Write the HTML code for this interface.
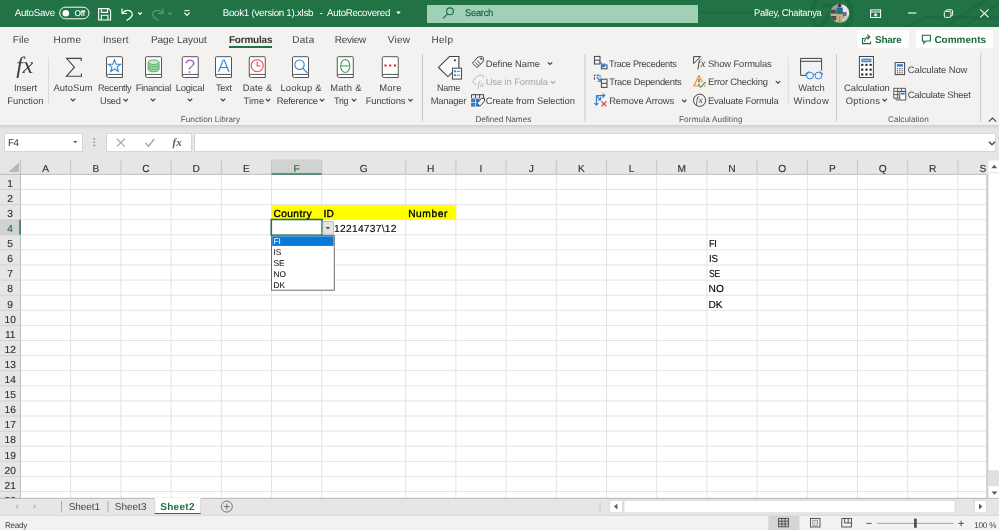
<!DOCTYPE html>
<html lang="en"><head><meta charset="utf-8"><title>Book1 (version 1).xlsb - AutoRecovered - Excel</title>
<style>
html,body{margin:0;padding:0;background:#fff;}
body{width:999px;height:530px;overflow:hidden;font-family:"Liberation Sans",sans-serif;}
#app{position:relative;width:999px;height:530px;overflow:hidden;background:#fff;}
#app div{position:absolute;box-sizing:border-box;}
#title{left:0;top:0;width:999px;height:27px;background:#217346;}
#search{left:427px;top:4.5px;width:271px;height:18px;background:#a0d0b6;}
#ribbon{left:0;top:27px;width:999px;height:98px;background:#f3f2f1;}
#rshadow{left:0;top:125px;width:999px;height:5px;background:linear-gradient(#cfcfcf,#d9d9d9 35%,#e2e2e2 70%,#e6e6e6);}
#fbar{left:0;top:128px;width:999px;height:32px;background:#e6e6e6;}
.wbox{background:#fff;border:1px solid #d6d6d6;}
#namebox{left:3.5px;top:133.4px;width:79px;height:18.6px;}
#fbtns{left:106.4px;top:133.4px;width:85.5px;height:18.6px;}
#finput{left:194.4px;top:133.4px;width:802px;height:18.6px;}
#hdr{left:0;top:159.5px;width:999px;height:15px;background:#e6e6e6;}
#rowhdr{left:0;top:174px;width:20.5px;height:324px;background:#e6e6e6;}
#grid{left:20.5px;top:174.5px;width:966.5px;height:323.5px;background:#fff;}
#vscroll{left:987px;top:159.5px;width:12px;height:339px;background:#f0f0f0;}
#tabbar{left:0;top:498px;width:999px;height:17.5px;background:#e6e6e6;border-top:1px solid #c6c6c6;}
#status{left:0;top:515.5px;width:999px;height:14.5px;background:#f3f2f1;}
#sharebtn{left:856.7px;top:29.5px;width:52px;height:18px;background:#fff;border-radius:2px;}
#combtn{left:915.6px;top:29.5px;width:77.2px;height:18px;background:#fff;border-radius:2px;}
#tabul{left:229px;top:46px;width:43px;height:2px;background:#217346;}
#art{position:absolute;left:0;top:0;width:999px;height:530px;will-change:transform;}
#texts{position:absolute;left:0;top:0;will-change:transform;}
span.t{position:absolute;white-space:pre;line-height:1;text-rendering:geometricPrecision;}
#art text{text-rendering:geometricPrecision;}
span.t{transform-origin:0 0;}

</style></head><body>
<div id="app">
<div id="title"></div>
<div id="search"></div>
<div id="ribbon"></div>
<div id="sharebtn"></div>
<div id="combtn"></div>
<div id="tabul"></div>
<div id="fbar"></div>
<div id="rshadow"></div>
<div id="namebox" class="wbox"></div>
<div id="fbtns" class="wbox"></div>
<div id="finput" class="wbox"></div>
<div id="hdr"></div>
<div id="rowhdr"></div>
<div id="grid"></div>
<div id="vscroll"></div>
<div id="tabbar"></div>
<div id="status"></div>
<svg id="art" width="999" height="530" viewBox="0 0 999 530">
<clipPath id="tc"><rect x="0" y="0" width="999" height="27"/></clipPath><g clip-path="url(#tc)" fill="none" stroke="#1d6a3f" stroke-width="4"><circle cx="831.9" cy="13.3" r="20"/><path d="M822,5.5 H836 L820,27"/><path d="M699,12.5 H812" stroke-width="2.4"/><path d="M900,30 L926,17.5 H999" stroke-width="2.4"/><path d="M940,30 L990,-3" stroke-width="2.4"/><path d="M958,30 L999,3" stroke-width="2.4"/></g>
<rect x="59.7" y="7.2" width="29.3" height="11.6" rx="5.8" fill="none" stroke="#fff" stroke-width="1"/>
<circle cx="65.8" cy="13.2" r="3.3" fill="#fff"/>
<g transform="translate(0,0.6)" fill="none" stroke="#fff" stroke-width="1.1"><path d="M98.6,8 H108.6 L110.6,10 V19.4 H98.6 Z"/><path d="M101.3,8 V11.8 H107.6 V8"/><path d="M101.3,19.4 V14.6 H107.9 V19.4"/></g>
<g transform="translate(0,0.5)" fill="none" stroke="#fff" stroke-width="1.2"><path d="M122,8 V13 H127"/><path d="M122.3,12.7 C125,9 130,9 131.8,12 C133.5,15 131,17.5 126.5,20"/></g>
<path d="M138.20,12.45 L140.00,14.35 L141.80,12.45" fill="none" stroke="#fff" stroke-width="1.2"/>
<g transform="translate(0,0.5)" fill="none" stroke="#5c9a7b" stroke-width="1.2"><path d="M163,8 V13 H158"/><path d="M162.7,12.7 C160,9 155,9 153.2,12 C151.5,15 154,17.5 158.5,20"/></g>
<path d="M168.20,12.45 L170.00,14.35 L171.80,12.45" fill="none" stroke="#5c9a7b" stroke-width="1.2"/>
<path d="M184.5,10.6 H189.5" stroke="#fff" stroke-width="1" fill="none"/>
<path d="M184.3,12.7 L187,15.4 L189.7,12.7" stroke="#fff" stroke-width="1.1" fill="none"/>
<path d="M396.2,11.5 H400.8 L398.5,14.2 Z" fill="#fff"/>
<g fill="none" stroke="#1e6b41" stroke-width="1.1"><circle cx="450" cy="11.3" r="3.4"/><path d="M447.6,13.8 L443,18.4"/></g>
<g><clipPath id="av"><circle cx="839.8" cy="13.3" r="9.3"/></clipPath><g clip-path="url(#av)"><rect x="830" y="3" width="20" height="21" fill="#cfcfcf"/><rect x="843" y="4" width="7" height="12" fill="#e4e6ea"/><rect x="830" y="4" width="9" height="6" fill="#9aa0a0"/><rect x="830" y="9.8" width="6.4" height="10.6" fill="#4b4c4a"/><rect x="830" y="13.6" width="6.4" height="2.4" fill="#b9b49c"/><rect x="842.6" y="12" width="4" height="6" fill="#6a6f80"/><rect x="843.6" y="16" width="5" height="7" fill="#c9c6ba"/><rect x="836.6" y="7.6" width="6.2" height="7" rx="1.4" fill="#1f6f86"/><circle cx="839.6" cy="5.6" r="1.7" fill="#3a2b22"/><rect x="836.9" y="14" width="5.4" height="9" fill="#c7ae6b"/><rect x="839.4" y="16" width="0.7" height="7" fill="#9a854e"/></g></g>
<g transform="translate(0,0.4)">
<g fill="none" stroke="#fff" stroke-width="1"><rect x="870.6" y="9.5" width="10" height="7.6"/><path d="M870.6,11.6 H880.6"/></g>
<path d="M875.6,12.6 L877.8,15 H876.2 V16.2 H875 V15 H873.4 Z" fill="#fff"/>
<path d="M908,12.6 H916.4" stroke="#fff" stroke-width="1.1"/>
<g fill="none" stroke="#fff" stroke-width="1"><rect x="944.3" y="11" width="6.6" height="6" rx="1.2"/><path d="M946,11 V10.6 Q946,9.4 947.2,9.4 H951.4 Q952.6,9.4 952.6,10.6 V14.4 Q952.6,15.4 951.4,15.4 H951"/></g>
<path d="M980.2,9 L988.6,17 M988.6,9 L980.2,17" stroke="#fff" stroke-width="1.1"/>
</g>
<g fill="none" stroke="#1e6b41" stroke-width="1.1"><path d="M864.5,38.5 H862.5 V43.6 H870.6 V41.5"/><path d="M864.6,41.6 C864.8,38.4 866.5,37 869,37 M867.3,34.6 L869.8,37 L867.3,39.4"/></g>
<path d="M922.4,35.2 H930.4 V41 H926 L923.8,43.2 V41 H922.4 Z" fill="none" stroke="#1e6b41" stroke-width="1.1"/>
<path d="M48.5,57.5 V104.5" stroke="#dcdcdc" stroke-width="1"/>
<path d="M422.5,54 V121.5" stroke="#c8c8c8" stroke-width="1"/>
<path d="M585,54 V121.5" stroke="#c8c8c8" stroke-width="1"/>
<path d="M788.3,57.5 V104.5" stroke="#dcdcdc" stroke-width="1"/>
<path d="M836.5,54 V121.5" stroke="#c8c8c8" stroke-width="1"/>
<path d="M980.7,53 V121.7" stroke="#c8c8c8" stroke-width="1"/>
<path d="M988.8,121.6 L992.5,118 L996.2,121.6" fill="none" stroke="#444" stroke-width="1.1"/>
<text x="16.2" y="73" font-family="Liberation Serif, serif" font-style="italic" font-size="23.5" fill="#3b3b3b">fx</text>
<path d="M81.2,61 V58.4 H66.6 L74.4,67.2 L66.6,76.2 H81.4 V73.6" fill="none" stroke="#444" stroke-width="1.15"/>
<g transform="translate(106,56.2)"><path d="M1.6,0.5 H15.5 Q16.5,0.5 16.5,1.5 V21.3 H2.6 Q0.5,21.3 0.5,19.4 V1.6 Q0.5,0.5 1.6,0.5 Z" fill="#fff" stroke="#555" stroke-width="1"/><path d="M0.6,19.6 Q0.6,18.2 2.4,18.2 H16.5" fill="none" stroke="#555" stroke-width="1"/></g>
<g transform="translate(145,56.2)"><path d="M1.6,0.5 H15.5 Q16.5,0.5 16.5,1.5 V21.3 H2.6 Q0.5,21.3 0.5,19.4 V1.6 Q0.5,0.5 1.6,0.5 Z" fill="#fff" stroke="#555" stroke-width="1"/><path d="M0.6,19.6 Q0.6,18.2 2.4,18.2 H16.5" fill="none" stroke="#555" stroke-width="1"/></g>
<g transform="translate(181.75,56.2)"><path d="M1.6,0.5 H15.5 Q16.5,0.5 16.5,1.5 V21.3 H2.6 Q0.5,21.3 0.5,19.4 V1.6 Q0.5,0.5 1.6,0.5 Z" fill="#fff" stroke="#555" stroke-width="1"/><path d="M0.6,19.6 Q0.6,18.2 2.4,18.2 H16.5" fill="none" stroke="#555" stroke-width="1"/></g>
<g transform="translate(215,56.2)"><path d="M1.6,0.5 H15.5 Q16.5,0.5 16.5,1.5 V21.3 H2.6 Q0.5,21.3 0.5,19.4 V1.6 Q0.5,0.5 1.6,0.5 Z" fill="#fff" stroke="#555" stroke-width="1"/><path d="M0.6,19.6 Q0.6,18.2 2.4,18.2 H16.5" fill="none" stroke="#555" stroke-width="1"/></g>
<g transform="translate(248.75,56.2)"><path d="M1.6,0.5 H15.5 Q16.5,0.5 16.5,1.5 V21.3 H2.6 Q0.5,21.3 0.5,19.4 V1.6 Q0.5,0.5 1.6,0.5 Z" fill="#fff" stroke="#555" stroke-width="1"/><path d="M0.6,19.6 Q0.6,18.2 2.4,18.2 H16.5" fill="none" stroke="#555" stroke-width="1"/></g>
<g transform="translate(292,56.2)"><path d="M1.6,0.5 H15.5 Q16.5,0.5 16.5,1.5 V21.3 H2.6 Q0.5,21.3 0.5,19.4 V1.6 Q0.5,0.5 1.6,0.5 Z" fill="#fff" stroke="#555" stroke-width="1"/><path d="M0.6,19.6 Q0.6,18.2 2.4,18.2 H16.5" fill="none" stroke="#555" stroke-width="1"/></g>
<g transform="translate(336.75,56.2)"><path d="M1.6,0.5 H15.5 Q16.5,0.5 16.5,1.5 V21.3 H2.6 Q0.5,21.3 0.5,19.4 V1.6 Q0.5,0.5 1.6,0.5 Z" fill="#fff" stroke="#555" stroke-width="1"/><path d="M0.6,19.6 Q0.6,18.2 2.4,18.2 H16.5" fill="none" stroke="#555" stroke-width="1"/></g>
<g transform="translate(381.75,56.2)"><path d="M1.6,0.5 H15.5 Q16.5,0.5 16.5,1.5 V21.3 H2.6 Q0.5,21.3 0.5,19.4 V1.6 Q0.5,0.5 1.6,0.5 Z" fill="#fff" stroke="#555" stroke-width="1"/><path d="M0.6,19.6 Q0.6,18.2 2.4,18.2 H16.5" fill="none" stroke="#555" stroke-width="1"/></g>
<polygon points="114.50,59.80 116.09,64.12 120.68,64.29 117.07,67.13 118.32,71.56 114.50,69.00 110.68,71.56 111.93,67.13 108.32,64.29 112.91,64.12" fill="none" stroke="#2b88d8" stroke-width="1.1" stroke-linejoin="miter"/>
<g fill="#a9d9b1" stroke="#4ea45e" stroke-width="0.9"><path d="M148.2,62.2 V69.6 A5.4,2.2 0 0 0 159.0,69.6 V62.2"/><ellipse cx="153.6" cy="62.2" rx="5.4" ry="2.3" fill="#c9e8ce"/><path d="M148.2,64.7 A5.4,2.2 0 0 0 159.0,64.7 M148.2,67.2 A5.4,2.2 0 0 0 159.0,67.2" fill="none"/></g>
<text x="190" y="72.8" text-anchor="middle" font-family="Liberation Sans, sans-serif" font-size="19.4" fill="#a54bc6" stroke="#fff" stroke-width="0.3">?</text>
<text x="223.7" y="72.3" text-anchor="middle" font-family="Liberation Sans, sans-serif" font-size="18.6" fill="#2b88d8" stroke="#fff" stroke-width="0.3">A</text>
<g fill="none" stroke="#e8484c" stroke-width="1.1"><circle cx="257.2" cy="65.7" r="6"/><path d="M257.2,61.6 V66 H260.6"/></g>
<g fill="none" stroke="#2b88d8" stroke-width="1.1"><circle cx="299.5" cy="64.7" r="4.7"/><path d="M302.8,68.2 L307.4,73"/></g>
<g fill="none" stroke="#3fa652" stroke-width="1.1"><ellipse cx="345.25" cy="66" rx="4.6" ry="6.5"/><path d="M340.6,65.9 H350"/></g>
<rect x="384.50" y="64.5" width="2" height="2" fill="#e81123"/>
<rect x="389.25" y="64.5" width="2" height="2" fill="#e81123"/>
<rect x="394.00" y="64.5" width="2" height="2" fill="#e81123"/>
<path d="M70.80,98.72 L73.00,100.88 L75.20,98.72" fill="none" stroke="#444" stroke-width="1.2"/>
<path d="M150.80,98.72 L153.00,100.88 L155.20,98.72" fill="none" stroke="#444" stroke-width="1.2"/>
<path d="M187.80,98.72 L190.00,100.88 L192.20,98.72" fill="none" stroke="#444" stroke-width="1.2"/>
<path d="M220.80,98.72 L223.00,100.88 L225.20,98.72" fill="none" stroke="#444" stroke-width="1.2"/>
<path d="M123.55,98.92 L125.75,101.08 L127.95,98.92" fill="none" stroke="#444" stroke-width="1.2"/>
<path d="M265.80,98.92 L268.00,101.08 L270.20,98.92" fill="none" stroke="#444" stroke-width="1.2"/>
<path d="M319.80,98.92 L322.00,101.08 L324.20,98.92" fill="none" stroke="#444" stroke-width="1.2"/>
<path d="M351.80,98.92 L354.00,101.08 L356.20,98.92" fill="none" stroke="#444" stroke-width="1.2"/>
<path d="M408.30,98.92 L410.50,101.08 L412.70,98.92" fill="none" stroke="#444" stroke-width="1.2"/>
<path d="M882.50,98.92 L884.70,101.08 L886.90,98.92" fill="none" stroke="#444" stroke-width="1.2"/>
<path d="M452.4,72.4 L447.9,76.6 L438.4,67.4 L449.5,56.5 H458.9 V68" fill="#fafafa" stroke="#444" stroke-width="1.1" stroke-linejoin="miter"/>
<circle cx="455" cy="60.3" r="1.1" fill="#444"/>
<rect x="452.5" y="68.2" width="9" height="10.9" fill="#fff" stroke="#555" stroke-width="1.1"/>
<g fill="#2b88d8"><rect x="453.9" y="70.3" width="2" height="2"/><rect x="453.9" y="74.2" width="2" height="2"/><rect x="456.6" y="70.9" width="3.6" height="0.9"/><rect x="456.6" y="74.8" width="3.6" height="0.9"/></g>
<g transform="translate(471.8,56)" fill="none" stroke="#444" stroke-width="1.0"><path d="M0.6,7.2 L6.2,1 L10.6,0.6 L11.6,1.8 L11.4,5.6 L5.2,11.6 Z" stroke-linejoin="round"/><path d="M3.6,6.6 L7,9.8 M5.4,4.8 L8.8,8"/><circle cx="9.4" cy="2.8" r="0.6" fill="#444"/></g>
<g fill="none" stroke="#b8b8b8" stroke-width="1"><path d="M472.4,81.6 L478,75.4 L482.4,75 L483.4,76.2 L483.3,78 M472.4,81.6 L476.6,85.6"/></g>
<text x="477.6" y="87" font-family="Liberation Serif, serif" font-style="italic" font-size="9" fill="#b0b0b0">fx</text>
<g><path d="M471.5,98 V94.7 H483.6 V98 M475.5,94.7 V98 M479.6,94.7 V98" fill="none" stroke="#444" stroke-width="1"/><path d="M471.5,98.2 H483.6" stroke="#999" stroke-width="0.8"/><g fill="#2b7cd3"><rect x="471.1" y="98.8" width="3.9" height="3.5"/><rect x="475.7" y="98.8" width="3.9" height="3.5"/><rect x="471.1" y="103" width="3.9" height="3.6"/><rect x="475.7" y="103" width="3.9" height="3.6"/></g></g>
<path d="M477,103.2 L481.6,98.6 L484.4,98.2 L484.6,101 L480,106.2 Z" fill="#f7f7f7" stroke="#444" stroke-width="1" stroke-linejoin="round"/>
<path d="M547.80,62.33 L550.00,64.48 L552.20,62.33" fill="none" stroke="#444" stroke-width="1.2"/>
<path d="M550.80,81.12 L553.00,83.28 L555.20,81.12" fill="none" stroke="#a8a8a8" stroke-width="1.2"/>
<g fill="none" stroke="#444" stroke-width="1"><rect x="594.4" y="56.4" width="5.6" height="7.6"/><path d="M594.4,60.2 H600"/><rect x="601.4" y="65" width="5.6" height="3.8"/></g>
<g fill="none" stroke="#2b7cd3" stroke-width="1.1"><path d="M599.4,61.4 L604,66"/><path d="M601,66.6 H604.4 V63.2"/></g>
<g fill="none" stroke="#444" stroke-width="1"><path d="M594.4,79.8 V75.2 H600 V77.2" stroke-dasharray="2.4,1"/><rect x="601.4" y="79.2" width="5.6" height="8.2"/><path d="M601.4,83.3 H607"/></g>
<g fill="none" stroke="#2b7cd3" stroke-width="1.1"><path d="M596.6,77 L600.6,81"/><path d="M597.6,81.2 H600.8 V78"/></g>
<g fill="none" stroke="#2b7cd3" stroke-width="1.1"><path d="M596.4,95.6 V105 M594.4,103 L596.4,105.2 L598.4,103"/><path d="M596.4,95.6 H604.6 M602.6,93.6 L604.8,95.6 L602.6,97.6"/><path d="M597,96.4 L600.4,99.8 M600.6,97 V100 H597.6"/></g>
<path d="M601.4,101.4 L606.4,106.4 M606.4,101.4 L601.4,106.4" stroke="#e03a3e" stroke-width="1.2" fill="none"/>
<path d="M682.05,99.72 L684.25,101.88 L686.45,99.72" fill="none" stroke="#444" stroke-width="1.2"/>
<path d="M700.6,56.6 H693.6 V63.6 L700.6,56.6" fill="none" stroke="#444" stroke-width="1"/>
<text x="697.2" y="67" font-family="Liberation Serif, serif" font-style="italic" font-size="11.5" fill="#444">fx</text>
<path d="M699,75.6 L693.8,86 H699.6 M699,75.6 L702.6,82.6" fill="none" stroke="#f08a24" stroke-width="1.2" stroke-linejoin="round"/>
<path d="M699,79 V82.6 M699,83.8 V84.8" stroke="#444" stroke-width="1.1"/>
<path d="M698.4,84.8 L700.8,87.2 L705.6,82" fill="none" stroke="#3fa652" stroke-width="1.2"/>
<path d="M703.8,86 H705.6" stroke="#f08a24" stroke-width="1.2"/>
<path d="M775.80,81.12 L778.00,83.28 L780.20,81.12" fill="none" stroke="#444" stroke-width="1.2"/>
<circle cx="699.6" cy="100.3" r="6.1" fill="none" stroke="#444" stroke-width="1"/>
<text x="695.8" y="103" font-family="Liberation Serif, serif" font-style="italic" font-size="9.5" fill="#444">fx</text>
<g fill="none" stroke="#444" stroke-width="1"><path d="M806,75.4 H800.6 V58.4 H821.6 V70.6"/><path d="M800.6,61.3 H821.6"/></g>
<g fill="none" stroke="#2b88d8" stroke-width="1"><circle cx="810" cy="75.6" r="3.4"/><circle cx="818.4" cy="75.6" r="3.4"/><path d="M813.2,74.6 Q814.2,73.6 815.2,74.6 M806.6,75 L805.6,73.6 L809,71.6 M821.8,75 L822.8,73.6 L819.4,71.6"/></g>
<rect x="859.4" y="56.5" width="14" height="21" fill="#fff" stroke="#444" stroke-width="1"/>
<rect x="861.4" y="58.6" width="10" height="3.6" fill="#2b88d8"/><path d="M862.4,60.4 H870.4" stroke="#cfe4f7" stroke-width="0.8"/>
<rect x="861.20" y="63.80" width="2.1" height="2.1" fill="#222"/>
<rect x="865.40" y="63.80" width="2.1" height="2.1" fill="#222"/>
<rect x="869.60" y="63.80" width="2.1" height="2.1" fill="#222"/>
<rect x="861.20" y="68.60" width="2.1" height="2.1" fill="#222"/>
<rect x="865.40" y="68.60" width="2.1" height="2.1" fill="#222"/>
<rect x="869.60" y="68.60" width="2.1" height="2.1" fill="#222"/>
<rect x="861.20" y="73.40" width="2.1" height="2.1" fill="#222"/>
<rect x="865.40" y="73.40" width="2.1" height="2.1" fill="#222"/>
<rect x="869.60" y="73.40" width="2.1" height="2.1" fill="#222"/>
<rect x="895.2" y="62.6" width="9.4" height="12" fill="#fff" stroke="#444" stroke-width="1"/>
<rect x="896.8" y="64.2" width="6.2" height="2.4" fill="#2b7cd3"/>
<rect x="896.90" y="68.00" width="1.3" height="1.2" fill="#555"/>
<rect x="899.20" y="68.00" width="1.3" height="1.2" fill="#555"/>
<rect x="901.50" y="68.00" width="1.3" height="1.2" fill="#555"/>
<rect x="896.90" y="70.10" width="1.3" height="1.2" fill="#555"/>
<rect x="899.20" y="70.10" width="1.3" height="1.2" fill="#555"/>
<rect x="901.50" y="70.10" width="1.3" height="1.2" fill="#555"/>
<rect x="896.90" y="72.20" width="1.3" height="1.2" fill="#555"/>
<rect x="899.20" y="72.20" width="1.3" height="1.2" fill="#555"/>
<rect x="901.50" y="72.20" width="1.3" height="1.2" fill="#555"/>
<g fill="none" stroke="#555" stroke-width="0.9"><rect x="893.8" y="88.3" width="11.6" height="9.8"/><path d="M893.8,91.4 H905.4 M893.8,94.6 H899 M897.6,88.3 V98.1 M901.4,88.3 V92"/></g>
<rect x="899.8" y="91.6" width="6" height="8.4" fill="#fff" stroke="#444" stroke-width="0.9"/><rect x="901" y="92.8" width="3.6" height="1.8" fill="#2b7cd3"/>
<path d="M896,98.4 V100 H899" stroke="#555" stroke-width="0.9" fill="none"/>
<path d="M73.2,140.9 H77.4 L75.3,143.2 Z" fill="#555"/>
<rect x="93.5" y="138.1" width="1.6" height="1.6" fill="#909090"/>
<rect x="93.5" y="141.4" width="1.6" height="1.6" fill="#909090"/>
<rect x="93.5" y="144.7" width="1.6" height="1.6" fill="#909090"/>
<path d="M116.8,138.8 L124.8,146.6 M124.8,138.8 L116.8,146.6" stroke="#a6a6a6" stroke-width="1.2"/>
<path d="M145.4,143 L148.6,146.2 L154.2,139" stroke="#a6a6a6" stroke-width="1.5" fill="none"/>
<text x="172.6" y="145.6" font-family="Liberation Serif, serif" font-style="italic" font-weight="bold" font-size="11" fill="#606060">fx</text>
<path d="M989.00,141.70 L992.00,144.70 L995.00,141.70" fill="none" stroke="#444" stroke-width="1.4"/>
<rect x="271.5" y="159.5" width="50.2" height="14.5" fill="#d2d2d2"/>
<rect x="0" y="219.70" width="20.5" height="15.1" fill="#d2d2d2"/>
<path d="M19,162.4 V172 H8.4 Z" fill="#b7b7b7"/>
<path d="M20.50,160 V174 M70.70,160 V174 M120.90,160 V174 M171.10,160 V174 M221.30,160 V174 M271.50,160 V174 M321.70,160 V174 M405.70,160 V174 M455.90,160 V174 M506.10,160 V174 M556.30,160 V174 M606.50,160 V174 M656.70,160 V174 M706.90,160 V174 M757.10,160 V174 M807.30,160 V174 M857.50,160 V174 M907.70,160 V174 M957.90,160 V174" stroke="#c4c4c4" stroke-width="1"/>
<path d="M0,174.40 H20.5 M0,189.50 H20.5 M0,204.60 H20.5 M0,219.70 H20.5 M0,234.80 H20.5 M0,249.90 H20.5 M0,265.00 H20.5 M0,280.10 H20.5 M0,295.20 H20.5 M0,310.30 H20.5 M0,325.40 H20.5 M0,340.50 H20.5 M0,355.60 H20.5 M0,370.70 H20.5 M0,385.80 H20.5 M0,400.90 H20.5 M0,416.00 H20.5 M0,431.10 H20.5 M0,446.20 H20.5 M0,461.30 H20.5 M0,476.40 H20.5 M0,491.50 H20.5" stroke="#d2d2d2" stroke-width="1"/>
<path d="M20.5,159.5 V498" stroke="#bdbdbd" stroke-width="1"/>
<path d="M0,174.3 H987" stroke="#bdbdbd" stroke-width="1"/>
<path d="M70.70,174.5 V498 M120.90,174.5 V498 M171.10,174.5 V498 M221.30,174.5 V498 M271.50,174.5 V498 M321.70,174.5 V498 M405.70,174.5 V498 M455.90,174.5 V498 M506.10,174.5 V498 M556.30,174.5 V498 M606.50,174.5 V498 M656.70,174.5 V498 M706.90,174.5 V498 M757.10,174.5 V498 M807.30,174.5 V498 M857.50,174.5 V498 M907.70,174.5 V498 M957.90,174.5 V498 M20.5,189.50 H987 M20.5,204.60 H987 M20.5,219.70 H987 M20.5,234.80 H987 M20.5,249.90 H987 M20.5,265.00 H987 M20.5,280.10 H987 M20.5,295.20 H987 M20.5,310.30 H987 M20.5,325.40 H987 M20.5,340.50 H987 M20.5,355.60 H987 M20.5,370.70 H987 M20.5,385.80 H987 M20.5,400.90 H987 M20.5,416.00 H987 M20.5,431.10 H987 M20.5,446.20 H987 M20.5,461.30 H987 M20.5,476.40 H987 M20.5,491.50 H987" stroke="#e3e3e3" stroke-width="1"/>
<rect x="272.00" y="205.10" width="184.10" height="14.80" fill="#ffff00"/>
<path d="M271.50,174 H321.70" stroke="#2f7f54" stroke-width="1.4"/>
<path d="M20,219.70 V234.80" stroke="#217346" stroke-width="1.4"/>
<rect x="271.30" y="219.50" width="50.80" height="15.70" fill="#fff" stroke="#217346" stroke-width="1.6"/>
<rect x="320.10" y="233.20" width="3.4" height="3.4" fill="#217346" stroke="#fff" stroke-width="0.6"/>
<rect x="322.8" y="221.6" width="10.8" height="12.6" fill="#e4e4e4" stroke="#b4b4b4" stroke-width="0.8"/>
<path d="M325.6,227 H330.2 L327.9,229.6 Z" fill="#555"/>
<rect x="271.5" y="235.6" width="62.8" height="54.6" fill="#fff" stroke="#6e6e6e" stroke-width="1"/>
<rect x="272.2" y="236.3" width="61.4" height="9.6" fill="#0a78d7"/>
<rect x="986" y="159.5" width="13" height="339" fill="#e1e1e1"/>
<rect x="988.3" y="160.4" width="10.7" height="11.8" fill="#fff"/>
<path d="M991.4,168.2 H997.2 L994.3,164.8 Z" fill="#555"/>
<rect x="988.3" y="173.2" width="10.7" height="297" fill="#fff"/>
<rect x="988.3" y="486.2" width="10.7" height="12" fill="#fff"/>
<path d="M991.6,491.4 H997.4 L994.5,494.8 Z" fill="#555"/>
<rect x="986" y="159.5" width="2.3" height="14.5" fill="#e6e6e6"/>
<rect x="986" y="174" width="2.3" height="324.5" fill="#d3d3d3"/>
<path d="M0,498.3 H999" stroke="#bcbcbc" stroke-width="1"/>
<path d="M18,503.8 L15.2,506.4 L18,509 Z" fill="#c0c0c0"/><path d="M33.6,503.8 L36.4,506.4 L33.6,509 Z" fill="#c0c0c0"/>
<path d="M61.5,501 V512.5 M108,501 V512.5" stroke="#ababab" stroke-width="1"/>
<rect x="154.5" y="498" width="46.2" height="15.6" fill="#fff"/>
<path d="M154.5,513.5 H200.7" stroke="#217346" stroke-width="1.2"/>
<path d="M154.8,498.5 V513 M200.4,498.5 V513" stroke="#cfcfcf" stroke-width="0.8"/>
<g fill="none" stroke="#666" stroke-width="0.9"><circle cx="226.8" cy="506.6" r="5.5"/><path d="M223.8,506.6 H229.8 M226.8,503.6 V509.6"/></g>
<rect x="599.6" y="503.6" width="1" height="1" fill="#888"/>
<rect x="599.6" y="506.4" width="1" height="1" fill="#888"/>
<rect x="599.6" y="509.2" width="1" height="1" fill="#888"/>
<rect x="609.5" y="500.4" width="13" height="12.4" fill="#fff" stroke="#d0d0d0" stroke-width="0.6"/>
<path d="M617.4,503.8 V509.4 L614,506.6 Z" fill="#555"/>
<rect x="624" y="500.4" width="331" height="12.4" fill="#fff" stroke="#d0d0d0" stroke-width="0.6"/>
<rect x="974.6" y="500.4" width="12" height="12.4" fill="#fff" stroke="#d0d0d0" stroke-width="0.6"/>
<path d="M979,503.8 V509.4 L982.4,506.6 Z" fill="#555"/>
<path d="M0,515.4 H999" stroke="#d9d9d9" stroke-width="1"/>
<rect x="768.4" y="516" width="31" height="14" fill="#d5d5d5"/>
<g fill="none" stroke="#444" stroke-width="0.9"><rect x="778.6" y="518.4" width="9.8" height="8.4"/><path d="M778.6,521.2 H788.4 M778.6,524 H788.4 M781.9,518.4 V526.8 M785.1,518.4 V526.8"/></g>
<g fill="none" stroke="#444" stroke-width="0.9"><rect x="810.4" y="518.4" width="9.6" height="8.6"/><rect x="812.8" y="520.2" width="4.8" height="5" stroke="#777" stroke-width="0.7"/><path d="M814.4,521.4 V524 M816,521.4 V524" stroke="#999" stroke-width="0.6"/></g>
<g fill="none" stroke="#444" stroke-width="0.9"><rect x="841.8" y="518.4" width="9.6" height="8.6"/><path d="M844.6,518.4 V523 H851.4 M848.2,518.4 V523"/></g>
<path d="M866.6,523.4 H871.6" stroke="#555" stroke-width="1"/>
<path d="M877,523.4 H953.4" stroke="#9a9a9a" stroke-width="0.9"/>
<rect x="914" y="518.6" width="2.8" height="9.2" fill="#555"/>
<path d="M958.4,523.4 H963.8 M961.1,520.7 V526.1" stroke="#555" stroke-width="1"/>
</svg>

<div id="texts">
<span class="t" id="t0" style="left:14.70px;top:9.30px;font-size:9.8px;color:#fff;letter-spacing:-0.298px;">AutoSave</span>
<span class="t" id="t1" style="left:74.50px;top:9.20px;font-size:8.4px;color:#fff;letter-spacing:-0.216px;-webkit-text-stroke:0.1px #fff;">Off</span>
<span class="t" id="t2" style="left:222.70px;top:9.30px;font-size:9.8px;color:#fff;letter-spacing:-0.292px;">Book1 (version 1).xlsb</span>
<span class="t" id="t3" style="left:319.50px;top:9.30px;font-size:9.8px;color:#fff;">-</span>
<span class="t" id="t4" style="left:327.20px;top:9.30px;font-size:9.8px;color:#fff;letter-spacing:-0.300px;transform:scaleX(0.9901);">AutoRecovered</span>
<span class="t" id="t5" style="left:465.20px;top:9.41px;font-size:9.8px;color:#185c37;letter-spacing:-0.300px;-webkit-text-stroke:0.12px #185c37;transform:scaleX(0.9578);">Search</span>
<span class="t" id="t6" style="left:753.95px;top:9.41px;font-size:9.8px;color:#fff;letter-spacing:-0.300px;transform:scaleX(0.9588);">Palley, Chaitanya</span>
<span class="t" id="t7" style="left:12.70px;top:35.80px;font-size:10px;color:#444;letter-spacing:0.142px;">File</span>
<span class="t" id="t8" style="left:53.45px;top:35.80px;font-size:10px;color:#444;letter-spacing:0.288px;">Home</span>
<span class="t" id="t9" style="left:102.95px;top:35.80px;font-size:10px;color:#444;letter-spacing:0.107px;">Insert</span>
<span class="t" id="t10" style="left:150.95px;top:35.80px;font-size:10px;color:#444;letter-spacing:-0.037px;">Page Layout</span>
<span class="t" id="t11" style="left:292.20px;top:35.80px;font-size:10px;color:#444;letter-spacing:0.308px;">Data</span>
<span class="t" id="t12" style="left:334.70px;top:35.80px;font-size:10px;color:#444;letter-spacing:-0.249px;">Review</span>
<span class="t" id="t13" style="left:387.70px;top:35.80px;font-size:10px;color:#444;letter-spacing:0.267px;">View</span>
<span class="t" id="t14" style="left:431.45px;top:35.80px;font-size:10px;color:#444;letter-spacing:0.324px;">Help</span>
<span class="t" id="t15" style="left:228.95px;top:35.80px;font-size:10px;color:#333;font-weight:700;letter-spacing:-0.209px;">Formulas</span>
<span class="t" id="t16" style="left:875.00px;top:35.80px;font-size:10px;color:#1e6b41;font-weight:700;letter-spacing:-0.249px;">Share</span>
<span class="t" id="t17" style="left:934.40px;top:35.80px;font-size:10px;color:#1e6b41;font-weight:700;letter-spacing:0.002px;">Comments</span>
<span class="t" id="t18" style="left:13.95px;top:83.26px;font-size:9.4px;color:#444;letter-spacing:-0.031px;">Insert</span>
<span class="t" id="t19" style="left:7.20px;top:95.76px;font-size:9.4px;color:#444;letter-spacing:0.047px;">Function</span>
<span class="t" id="t20" style="left:53.45px;top:83.26px;font-size:9.4px;color:#444;letter-spacing:0.081px;">AutoSum</span>
<span class="t" id="t21" style="left:97.70px;top:83.26px;font-size:9.4px;color:#444;letter-spacing:-0.300px;transform:scaleX(0.9757);">Recently</span>
<span class="t" id="t22" style="left:99.70px;top:95.76px;font-size:9.4px;color:#444;letter-spacing:-0.300px;transform:scaleX(0.9909);">Used</span>
<span class="t" id="t23" style="left:135.70px;top:83.26px;font-size:9.4px;color:#444;letter-spacing:-0.248px;">Financial</span>
<span class="t" id="t24" style="left:175.70px;top:83.26px;font-size:9.4px;color:#444;letter-spacing:-0.153px;">Logical</span>
<span class="t" id="t25" style="left:215.70px;top:83.26px;font-size:9.4px;color:#444;letter-spacing:-0.300px;transform:scaleX(0.9691);">Text</span>
<span class="t" id="t26" style="left:242.70px;top:83.26px;font-size:9.4px;color:#444;letter-spacing:0.176px;">Date &amp;</span>
<span class="t" id="t27" style="left:243.45px;top:95.76px;font-size:9.4px;color:#444;letter-spacing:0.105px;">Time</span>
<span class="t" id="t28" style="left:280.45px;top:83.26px;font-size:9.4px;color:#444;letter-spacing:0.204px;">Lookup &amp;</span>
<span class="t" id="t29" style="left:276.70px;top:95.76px;font-size:9.4px;color:#444;letter-spacing:-0.246px;">Reference</span>
<span class="t" id="t30" style="left:330.20px;top:83.26px;font-size:9.4px;color:#444;letter-spacing:0.319px;">Math &amp;</span>
<span class="t" id="t31" style="left:333.70px;top:95.76px;font-size:9.4px;color:#444;letter-spacing:-0.300px;transform:scaleX(0.9935);">Trig</span>
<span class="t" id="t32" style="left:379.20px;top:83.26px;font-size:9.4px;color:#444;letter-spacing:0.314px;">More</span>
<span class="t" id="t33" style="left:365.70px;top:95.76px;font-size:9.4px;color:#444;letter-spacing:-0.107px;">Functions</span>
<span class="t" id="t34" style="left:437.20px;top:83.26px;font-size:9.4px;color:#444;letter-spacing:-0.300px;transform:scaleX(0.9662);">Name</span>
<span class="t" id="t35" style="left:430.70px;top:95.76px;font-size:9.4px;color:#444;letter-spacing:-0.203px;">Manager</span>
<span class="t" id="t36" style="left:798.20px;top:83.26px;font-size:9.4px;color:#444;letter-spacing:0.091px;">Watch</span>
<span class="t" id="t37" style="left:793.60px;top:95.76px;font-size:9.4px;color:#444;letter-spacing:0.351px;">Window</span>
<span class="t" id="t38" style="left:844.10px;top:83.26px;font-size:9.4px;color:#444;letter-spacing:-0.074px;">Calculation</span>
<span class="t" id="t39" style="left:845.70px;top:95.76px;font-size:9.4px;color:#444;letter-spacing:0.315px;">Options</span>
<span class="t" id="t40" style="left:485.70px;top:58.61px;font-size:9.4px;color:#444;letter-spacing:-0.042px;">Define Name</span>
<span class="t" id="t41" style="left:485.70px;top:77.31px;font-size:9.4px;color:#a8a8a8;letter-spacing:-0.097px;">Use in Formula</span>
<span class="t" id="t42" style="left:485.70px;top:96.31px;font-size:9.4px;color:#444;letter-spacing:-0.069px;">Create from Selection</span>
<span class="t" id="t43" style="left:609.20px;top:58.61px;font-size:9.4px;color:#444;letter-spacing:-0.300px;transform:scaleX(0.9804);">Trace Precedents</span>
<span class="t" id="t44" style="left:609.20px;top:77.31px;font-size:9.4px;color:#444;letter-spacing:-0.282px;">Trace Dependents</span>
<span class="t" id="t45" style="left:609.20px;top:96.31px;font-size:9.4px;color:#444;letter-spacing:-0.093px;">Remove Arrows</span>
<span class="t" id="t46" style="left:707.95px;top:58.61px;font-size:9.4px;color:#444;letter-spacing:-0.112px;">Show Formulas</span>
<span class="t" id="t47" style="left:707.95px;top:77.31px;font-size:9.4px;color:#444;letter-spacing:-0.191px;">Error Checking</span>
<span class="t" id="t48" style="left:707.95px;top:96.31px;font-size:9.4px;color:#444;letter-spacing:-0.179px;">Evaluate Formula</span>
<span class="t" id="t49" style="left:907.80px;top:65.01px;font-size:9.4px;color:#444;letter-spacing:-0.071px;">Calculate Now</span>
<span class="t" id="t50" style="left:907.80px;top:90.01px;font-size:9.4px;color:#444;letter-spacing:-0.215px;">Calculate Sheet</span>
<span class="t" id="t51" style="left:180.70px;top:115.70px;font-size:8.2px;color:#555;letter-spacing:0.039px;">Function Library</span>
<span class="t" id="t52" style="left:475.45px;top:115.70px;font-size:8.2px;color:#555;letter-spacing:-0.053px;">Defined Names</span>
<span class="t" id="t53" style="left:678.95px;top:115.70px;font-size:8.2px;color:#555;letter-spacing:0.140px;">Formula Auditing</span>
<span class="t" id="t54" style="left:888.00px;top:115.70px;font-size:8.2px;color:#555;letter-spacing:0.023px;">Calculation</span>
<span class="t" id="t55" style="left:7.50px;top:139.21px;font-size:10px;color:#333;letter-spacing:-0.300px;transform:scaleX(0.9673);">F4</span>
<span class="t" id="t56" style="left:42.20px;top:164.61px;font-size:10.2px;color:#333;-webkit-text-stroke:0.15px #333;">A</span>
<span class="t" id="t57" style="left:92.40px;top:164.61px;font-size:10.2px;color:#333;-webkit-text-stroke:0.15px #333;">B</span>
<span class="t" id="t58" style="left:142.32px;top:164.61px;font-size:10.2px;color:#333;-webkit-text-stroke:0.15px #333;">C</span>
<span class="t" id="t59" style="left:192.52px;top:164.61px;font-size:10.2px;color:#333;-webkit-text-stroke:0.15px #333;">D</span>
<span class="t" id="t60" style="left:243.00px;top:164.61px;font-size:10.2px;color:#333;-webkit-text-stroke:0.15px #333;">E</span>
<span class="t" id="t61" style="left:293.48px;top:164.61px;font-size:10.2px;color:#217346;-webkit-text-stroke:0.15px #217346;">F</span>
<span class="t" id="t62" style="left:359.73px;top:164.61px;font-size:10.2px;color:#333;-webkit-text-stroke:0.15px #333;">G</span>
<span class="t" id="t63" style="left:427.12px;top:164.61px;font-size:10.2px;color:#333;-webkit-text-stroke:0.15px #333;">H</span>
<span class="t" id="t64" style="left:479.58px;top:164.61px;font-size:10.2px;color:#333;-webkit-text-stroke:0.15px #333;">I</span>
<span class="t" id="t65" style="left:528.65px;top:164.61px;font-size:10.2px;color:#333;-webkit-text-stroke:0.15px #333;">J</span>
<span class="t" id="t66" style="left:578.00px;top:164.61px;font-size:10.2px;color:#333;-webkit-text-stroke:0.15px #333;">K</span>
<span class="t" id="t67" style="left:628.76px;top:164.61px;font-size:10.2px;color:#333;-webkit-text-stroke:0.15px #333;">L</span>
<span class="t" id="t68" style="left:677.55px;top:164.61px;font-size:10.2px;color:#333;-webkit-text-stroke:0.15px #333;">M</span>
<span class="t" id="t69" style="left:728.32px;top:164.61px;font-size:10.2px;color:#333;-webkit-text-stroke:0.15px #333;">N</span>
<span class="t" id="t70" style="left:778.23px;top:164.61px;font-size:10.2px;color:#333;-webkit-text-stroke:0.15px #333;">O</span>
<span class="t" id="t71" style="left:829.00px;top:164.61px;font-size:10.2px;color:#333;-webkit-text-stroke:0.15px #333;">P</span>
<span class="t" id="t72" style="left:878.63px;top:164.61px;font-size:10.2px;color:#333;-webkit-text-stroke:0.15px #333;">Q</span>
<span class="t" id="t73" style="left:929.12px;top:164.61px;font-size:10.2px;color:#333;-webkit-text-stroke:0.15px #333;">R</span>
<span class="t" id="t74" style="left:979.60px;top:164.61px;font-size:10.2px;color:#333;-webkit-text-stroke:0.15px #333;">S</span>
<span class="t" id="t75" style="left:7.36px;top:179.70px;font-size:10.2px;color:#333;-webkit-text-stroke:0.15px #333;">1</span>
<span class="t" id="t76" style="left:7.36px;top:194.81px;font-size:10.2px;color:#333;-webkit-text-stroke:0.15px #333;">2</span>
<span class="t" id="t77" style="left:7.36px;top:209.91px;font-size:10.2px;color:#333;-webkit-text-stroke:0.15px #333;">3</span>
<span class="t" id="t78" style="left:7.36px;top:225.00px;font-size:10.2px;color:#217346;-webkit-text-stroke:0.15px #217346;">4</span>
<span class="t" id="t79" style="left:7.36px;top:240.11px;font-size:10.2px;color:#333;-webkit-text-stroke:0.15px #333;">5</span>
<span class="t" id="t80" style="left:7.36px;top:255.20px;font-size:10.2px;color:#333;-webkit-text-stroke:0.15px #333;">6</span>
<span class="t" id="t81" style="left:7.36px;top:270.31px;font-size:10.2px;color:#333;-webkit-text-stroke:0.15px #333;">7</span>
<span class="t" id="t82" style="left:7.36px;top:285.41px;font-size:10.2px;color:#333;-webkit-text-stroke:0.15px #333;">8</span>
<span class="t" id="t83" style="left:7.36px;top:300.50px;font-size:10.2px;color:#333;-webkit-text-stroke:0.15px #333;">9</span>
<span class="t" id="t84" style="left:4.53px;top:315.61px;font-size:10.2px;color:#333;-webkit-text-stroke:0.15px #333;">10</span>
<span class="t" id="t85" style="left:4.91px;top:330.70px;font-size:10.2px;color:#333;-webkit-text-stroke:0.15px #333;">11</span>
<span class="t" id="t86" style="left:4.53px;top:345.81px;font-size:10.2px;color:#333;-webkit-text-stroke:0.15px #333;">12</span>
<span class="t" id="t87" style="left:4.53px;top:360.91px;font-size:10.2px;color:#333;-webkit-text-stroke:0.15px #333;">13</span>
<span class="t" id="t88" style="left:4.53px;top:376.00px;font-size:10.2px;color:#333;-webkit-text-stroke:0.15px #333;">14</span>
<span class="t" id="t89" style="left:4.53px;top:391.11px;font-size:10.2px;color:#333;-webkit-text-stroke:0.15px #333;">15</span>
<span class="t" id="t90" style="left:4.53px;top:406.20px;font-size:10.2px;color:#333;-webkit-text-stroke:0.15px #333;">16</span>
<span class="t" id="t91" style="left:4.53px;top:421.31px;font-size:10.2px;color:#333;-webkit-text-stroke:0.15px #333;">17</span>
<span class="t" id="t92" style="left:4.53px;top:436.41px;font-size:10.2px;color:#333;-webkit-text-stroke:0.15px #333;">18</span>
<span class="t" id="t93" style="left:4.53px;top:451.50px;font-size:10.2px;color:#333;-webkit-text-stroke:0.15px #333;">19</span>
<span class="t" id="t94" style="left:4.53px;top:466.61px;font-size:10.2px;color:#333;-webkit-text-stroke:0.15px #333;">20</span>
<span class="t" id="t95" style="left:4.53px;top:481.70px;font-size:10.2px;color:#333;-webkit-text-stroke:0.15px #333;">21</span>
<span class="t" id="t96" style="left:4.53px;top:496.81px;font-size:10.2px;color:#333;-webkit-text-stroke:0.15px #333;clip-path:inset(0 0 9.01px 0);">22</span>
<span class="t" id="t97" style="left:273.40px;top:209.91px;font-size:10.2px;color:#000;letter-spacing:0.421px;-webkit-text-stroke:0.35px #000;">Country</span>
<span class="t" id="t98" style="left:323.40px;top:209.91px;font-size:10.2px;color:#000;letter-spacing:0.213px;-webkit-text-stroke:0.35px #000;">ID</span>
<span class="t" id="t99" style="left:408.20px;top:209.91px;font-size:10.2px;color:#000;letter-spacing:0.573px;-webkit-text-stroke:0.35px #000;">Number</span>
<span class="t" id="t100" style="left:334.10px;top:225.00px;font-size:10.2px;color:#000;letter-spacing:0.280px;-webkit-text-stroke:0.12px #000;">12214737\12</span>
<span class="t" id="t101" style="left:708.60px;top:240.11px;font-size:10.2px;color:#000;letter-spacing:-0.300px;-webkit-text-stroke:0.12px #000;transform:scaleX(0.9016);">FI</span>
<span class="t" id="t102" style="left:708.60px;top:255.20px;font-size:10.2px;color:#000;letter-spacing:-0.300px;-webkit-text-stroke:0.12px #000;transform:scaleX(0.9528);">IS</span>
<span class="t" id="t103" style="left:708.60px;top:270.31px;font-size:10.2px;color:#000;letter-spacing:-0.300px;-webkit-text-stroke:0.12px #000;transform:scaleX(0.8425);">SE</span>
<span class="t" id="t104" style="left:708.60px;top:285.41px;font-size:10.2px;color:#000;letter-spacing:0.019px;-webkit-text-stroke:0.12px #000;">NO</span>
<span class="t" id="t105" style="left:708.60px;top:300.50px;font-size:10.2px;color:#000;letter-spacing:-0.256px;-webkit-text-stroke:0.12px #000;">DK</span>
<span class="t" id="t106" style="left:273.60px;top:237.41px;font-size:8.3px;color:#fff;letter-spacing:-0.2px;">FI</span>
<span class="t" id="t107" style="left:273.60px;top:248.41px;font-size:8.3px;color:#000;letter-spacing:-0.2px;">IS</span>
<span class="t" id="t108" style="left:273.60px;top:259.41px;font-size:8.3px;color:#000;letter-spacing:-0.2px;">SE</span>
<span class="t" id="t109" style="left:273.60px;top:270.41px;font-size:8.3px;color:#000;letter-spacing:-0.2px;">NO</span>
<span class="t" id="t110" style="left:273.60px;top:281.41px;font-size:8.3px;color:#000;letter-spacing:-0.2px;">DK</span>
<span class="t" id="t111" style="left:68.70px;top:502.61px;font-size:10px;color:#444;letter-spacing:-0.081px;">Sheet1</span>
<span class="t" id="t112" style="left:114.70px;top:502.61px;font-size:10px;color:#444;letter-spacing:0.019px;">Sheet3</span>
<span class="t" id="t113" style="left:160.20px;top:502.61px;font-size:10px;color:#217346;font-weight:700;letter-spacing:0.301px;">Sheet2</span>
<span class="t" id="t114" style="left:5.20px;top:521.50px;font-size:8.2px;color:#444;letter-spacing:-0.300px;transform:scaleX(0.9924);">Ready</span>
<span class="t" id="t115" style="left:974.20px;top:521.50px;font-size:8.2px;color:#444;letter-spacing:-0.230px;">100 %</span>
</div>
</div>
</body></html>
